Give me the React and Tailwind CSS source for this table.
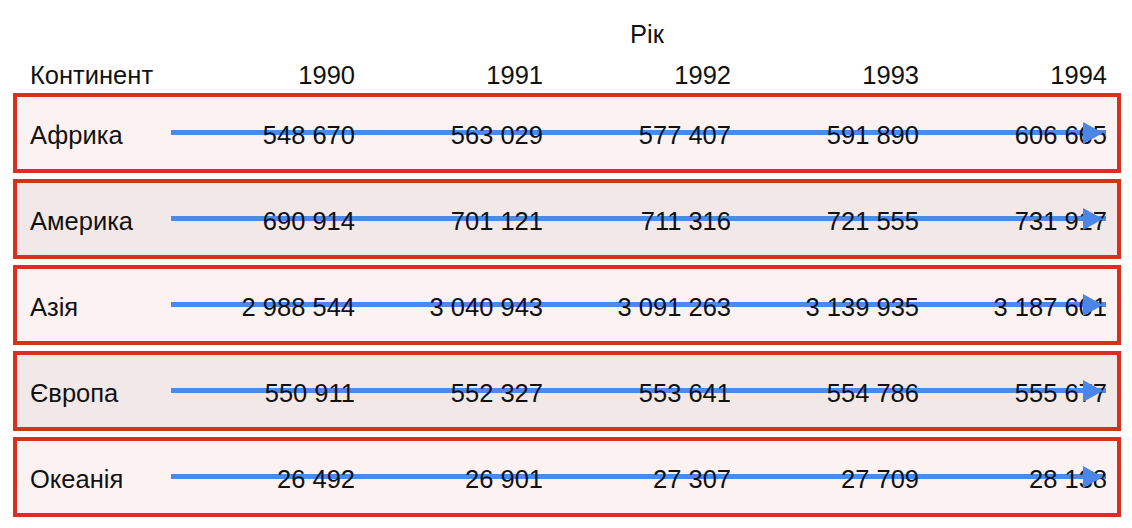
const YEARS = ['1990', '1991', '1992', '1993', '1994']

const ROWS = [
  { name: 'Африка', values: ['548 670', '563 029', '577 407', '591 890', '606 665'], shade: 'bg-[#fcf2f2]' },
  { name: 'Америка', values: ['690 914', '701 121', '711 316', '721 555', '731 917'], shade: 'bg-[#f3e8e8]' },
  { name: 'Азія', values: ['2 988 544', '3 040 943', '3 091 263', '3 139 935', '3 187 601'], shade: 'bg-[#fcf2f2]' },
  { name: 'Європа', values: ['550 911', '552 327', '553 641', '554 786', '555 677'], shade: 'bg-[#f3e8e8]' },
  { name: 'Океанія', values: ['26 492', '26 901', '27 307', '27 709', '28 138'], shade: 'bg-[#fcf2f2]' },
]

const GRID = 'grid grid-cols-[137px_repeat(5,188px)] items-center'

function Arrow() {
  return (
    <>
      {/* shaft sits behind the numbers */}
      <div className="absolute left-[154px] top-1/2 -translate-y-[3px] w-[935px] h-[5px] bg-[#4f88e6] z-0" />
      {/* head sits over them */}
      <svg className="absolute left-[1066px] top-1/2 -translate-y-[11px] z-20" width="20" height="22" viewBox="0 0 20 22">
        <polygon points="0,0 20,11 0,22" fill="#4a86e8" />
      </svg>
    </>
  )
}

export default function App() {
  return (
    <div className="w-[1132px] h-[528px] bg-white text-[#111] text-[25.5px] leading-[30px] pl-[13px] pr-[11px] pt-[19px]" style={{ fontFamily: '"Liberation Sans", Arial, sans-serif' }}>
      <div className="pl-[617px]">Рік</div>

      <div className={`${GRID} mt-[11px] px-[17px]`}>
        <div>Континент</div>
        {YEARS.map((y) => (
          <div key={y} className="text-right">{y}</div>
        ))}
      </div>

      <div className="mt-[3px] flex flex-col gap-[6px]">
        {ROWS.map((row) => (
          <div key={row.name} className={`relative h-[80px] border-4 border-[#d8301f] ${row.shade} pl-[13px] ${GRID} pt-[3px]`}>
            <Arrow />
            <div className="relative z-10">{row.name}</div>
            {row.values.map((v, i) => (
              <div key={i} className="relative z-10 text-right">{v}</div>
            ))}
          </div>
        ))}
      </div>
    </div>
  )
}
